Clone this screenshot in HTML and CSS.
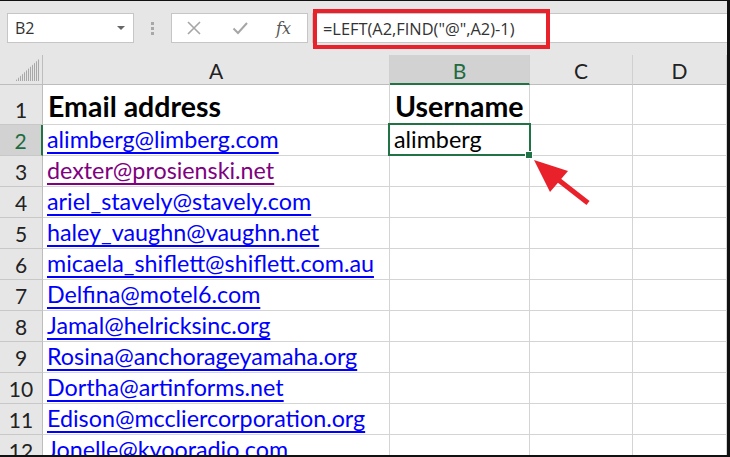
FILE: index.html
```html
<!DOCTYPE html>
<html>
<head>
<meta charset="utf-8">
<link rel="stylesheet" href="styles.css">
</head>
<body>
<div class="frame">
  <div class="toolbar">
    <div class="namebox"><span>B2</span><span class="dd"></span></div>
    <div class="grip"><i></i><i></i><i></i></div>
    <div class="fxbox">
      <svg class="ic" width="16" height="16" viewBox="0 0 16 16"><path d="M2 2L14 14M14 2L2 14" stroke="#a6a6a6" stroke-width="1.6" fill="none"/></svg>
      <svg class="ic" width="16" height="16" viewBox="0 0 16 16"><path d="M1.5 8.5L6 13L15 3" stroke="#a6a6a6" stroke-width="2" fill="none"/></svg>
      <span class="fx">fx</span>
    </div>
    <div class="formula">
      <span class="ftext">=LEFT(A2,FIND("@",A2)-1)</span>
      <div class="redbox"></div>
    </div>
  </div>
  <div class="sheet">
    <div class="corner"><svg width="26" height="24" viewBox="0 0 26 24"><defs><pattern id="st" width="2" height="2" patternUnits="userSpaceOnUse"><rect width="1" height="2" fill="#a8a8a8"/></pattern></defs><polygon points="25,1 25,23 1,23" fill="url(#st)"/></svg></div>
    <div class="ch">A</div>
    <div class="ch sel">B</div>
    <div class="ch">C</div>
    <div class="ch">D</div>

    <div class="rh r1">1</div><div class="c r1 b">Email address</div><div class="c r1 b">Username</div><div class="c r1"></div><div class="c r1"></div>
    <div class="rh sel">2</div><div class="c"><span class="lk">alimberg@limberg.com</span></div><div class="c active">alimberg<span class="handle"></span></div><div class="c"></div><div class="c"></div>
    <div class="rh">3</div><div class="c"><span class="lk vis">dexter@prosienski.net</span></div><div class="c"></div><div class="c"></div><div class="c"></div>
    <div class="rh">4</div><div class="c"><span class="lk">ariel_stavely@stavely.com</span></div><div class="c"></div><div class="c"></div><div class="c"></div>
    <div class="rh">5</div><div class="c"><span class="lk">haley_vaughn@vaughn.net</span></div><div class="c"></div><div class="c"></div><div class="c"></div>
    <div class="rh">6</div><div class="c"><span class="lk">micaela_shiflett@shiflett.com.au</span></div><div class="c"></div><div class="c"></div><div class="c"></div>
    <div class="rh">7</div><div class="c"><span class="lk">Delfina@motel6.com</span></div><div class="c"></div><div class="c"></div><div class="c"></div>
    <div class="rh">8</div><div class="c"><span class="lk">Jamal@helricksinc.org</span></div><div class="c"></div><div class="c"></div><div class="c"></div>
    <div class="rh">9</div><div class="c"><span class="lk">Rosina@anchorageyamaha.org</span></div><div class="c"></div><div class="c"></div><div class="c"></div>
    <div class="rh">10</div><div class="c"><span class="lk">Dortha@artinforms.net</span></div><div class="c"></div><div class="c"></div><div class="c"></div>
    <div class="rh">11</div><div class="c"><span class="lk">Edison@mccliercorporation.org</span></div><div class="c"></div><div class="c"></div><div class="c"></div>
    <div class="rh">12</div><div class="c"><span class="lk">Jonelle@kyooradio.com</span></div><div class="c"></div><div class="c"></div><div class="c"></div>
  </div>
  <svg class="arrow" width="70" height="60" viewBox="0 0 70 60"><line x1="14" y1="13" x2="55" y2="45" stroke="#e8212b" stroke-width="5"/><polygon points="1,2 35,13 17,34" fill="#e8212b"/></svg>
</div>
</body>
</html>
```
FILE: styles.css
```css
html, body { margin: 0; padding: 0; background: #fff; }
.frame {
  position: relative;
  width: 730px; height: 457px;
  box-sizing: border-box;
  border-top: 1px solid #111;
  border-right: 3px solid #111;
  border-bottom: 2px solid #111;
  overflow: hidden;
  background: #fff;
}
.toolbar {
  height: 54px;
  background: #e6e6e6;
  box-sizing: border-box;
  padding: 12px 0 0 7px;
  display: flex;
  align-items: flex-start;
  font-family: "Open Sans", "Noto Sans", sans-serif;
}
.namebox {
  width: 127px; height: 30px; box-sizing: border-box;
  background: #fff; border: 1px solid #c6c6c6;
  display: flex; align-items: center; justify-content: space-between;
  padding: 0 8px 0 7px;
  font-size: 16px; color: #333;
}
.dd { width: 0; height: 0; border-left: 4px solid transparent; border-right: 4px solid transparent; border-top: 4px solid #666; }
.grip { width: 37px; height: 30px; display: flex; flex-direction: column; align-items: center; justify-content: center; gap: 2px; }
.grip i { display: block; width: 3px; height: 3px; background: #a8a8a8; }
.fxbox {
  width: 137px; height: 30px; box-sizing: border-box;
  background: #fff; border: 1px solid #c6c6c6;
  display: flex; align-items: center;
  padding-left: 14px;
}
.fxbox .ic { margin-right: 30px; }
.fxbox .fx { font-family: "DejaVu Serif", "Liberation Serif", serif; font-style: italic; font-size: 16px; color: #555; margin-left: -2px; }
.formula {
  position: relative;
  flex: 1; height: 30px; box-sizing: border-box; margin-left: 4px;
  background: #fff; border: 1px solid #c6c6c6; border-right: none;
  display: flex; align-items: center; padding-left: 10px;
  font-size: 16.4px; color: #333;
}
.redbox {
  position: absolute; left: 0; top: -5px;
  width: 237px; height: 40px; box-sizing: border-box;
  border: 4px solid #e8212b;
}
.sheet {
  display: grid;
  grid-template-columns: 43px 347px 140px 103px 1fr;
  grid-template-rows: 30px 40px;
  grid-auto-rows: 31px;
  font-family: Lato, "Liberation Sans", sans-serif;
  font-size: 23.3px;
}
.sheet > div { box-sizing: border-box; }
.corner { background: #e6e6e6; border-right: 1px solid #bdbdbd; border-bottom: 1px solid #bdbdbd; display: flex; align-items: flex-end; justify-content: flex-end; padding: 0 2px 2px 0; }
.ch { background: #e6e6e6; border-right: 1px solid #d0d0d0; border-bottom: 1px solid #bdbdbd; display: flex; align-items: center; justify-content: center; color: #222; padding-top: 2px; font-size: 21px; }
.ch.sel { background: #d2d2d2; border-bottom: 2px solid #217346; color: #1e6b41; }
.rh { background: #e6e6e6; border-right: 1px solid #bdbdbd; border-bottom: 1px solid #c8c8c8; display: flex; align-items: flex-end; justify-content: center; padding-bottom: 2px; color: #222; font-size: 21px; }
.rh.sel { background: #d2d2d2; border-right: 2px solid #217346; color: #1e6b41; }
.c { border-right: 1px solid #d4d4d4; border-bottom: 1px solid #d4d4d4; display: flex; align-items: flex-end; padding: 0 0 2px 4px; white-space: nowrap; color: #000; line-height: 1.15; }
.c.b { font-weight: bold; font-size: 28.5px; padding-bottom: 1px; padding-left: 5px; }
.lk { color: #0000ff; text-decoration: underline; text-decoration-thickness: 1.5px; text-underline-offset: 4px; }
.lk.vis { color: #800080; }
.c.active { position: relative; }
.c.active::after { content: ""; position: absolute; left: -2px; top: -2px; right: -2px; bottom: -1px; border: 2px solid #217346; }
.handle { position: absolute; right: -4px; bottom: -4px; width: 6px; height: 6px; background: #217346; border: 1px solid #fff; z-index: 2; }
.arrow { position: absolute; left: 533px; top: 157px; }
```
